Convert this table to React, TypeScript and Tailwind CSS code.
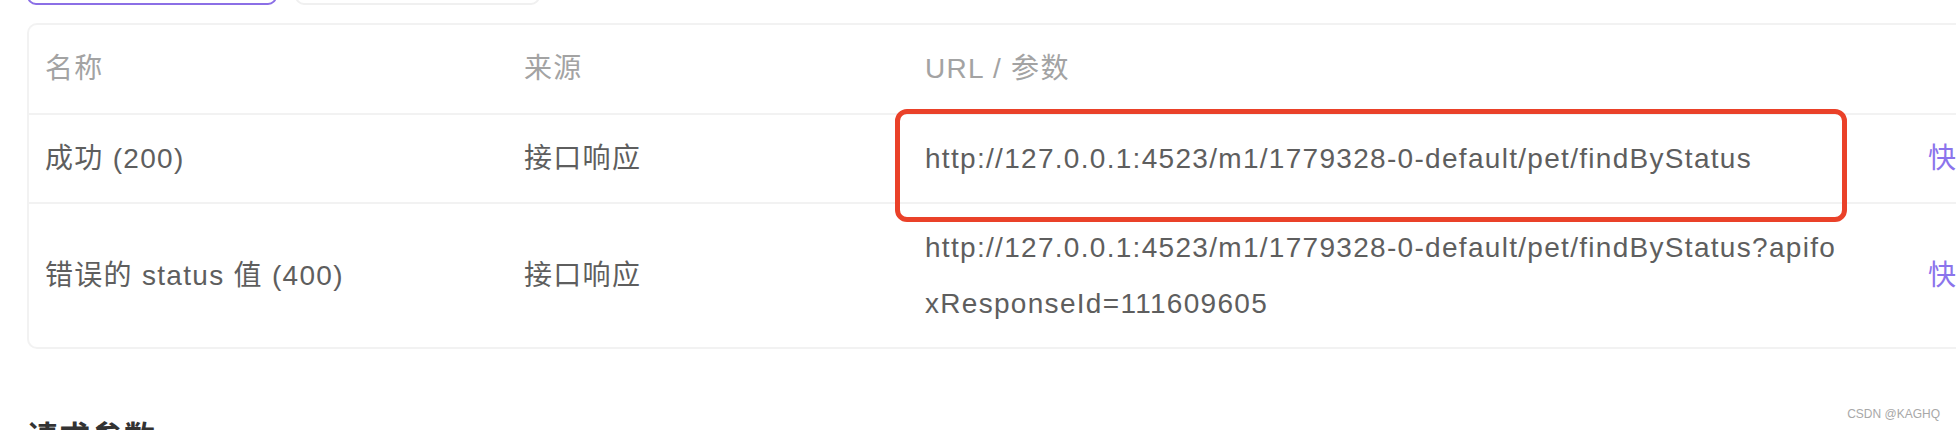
import React from "react";

type Row = {
    name: string;
    source: string;
    url: string;
    highlighted?: boolean;
};

const rows: Row[] = [
    {
        name: "成功 (200)",
        source: "接口响应",
        url: "http://127.0.0.1:4523/m1/1779328-0-default/pet/findByStatus",
        highlighted: true,
    },
    {
        name: "错误的 status 值 (400)",
        source: "接口响应",
        url: "http://127.0.0.1:4523/m1/1779328-0-default/pet/findByStatus?apifoxResponseId=111609605",
    },
];

const cols = "grid grid-cols-[479px_401px_1003px_200px]";

export default function App() {
    return (
        <div
            className="relative h-[430px] w-[1956px] overflow-hidden bg-white pl-[27px] text-[28px] tracking-[1.3px] text-[#5e5e5e]"
            style={{ fontFamily: '"Liberation Sans", "Noto Sans CJK SC", sans-serif' }}
        >
            {/* 顶部标签（只露出底边） */}
            <div className="-mt-[30px] flex gap-[18px]">
                <div className="h-[35px] w-[250px] rounded-[9px] border-2 border-[#8b6fe6]" />
                <div className="h-[35px] w-[245px] rounded-[9px] border-2 border-[#f0f0f0]" />
            </div>

            {/* 表格 */}
            <div className="mt-[18px] w-[2100px] rounded-tl-[10px] rounded-bl-[10px] border-2 border-r-0 border-[#f2f2f2]">
                <div className={`${cols} border-b-2 border-[#f2f2f2] text-[#a3a3a3]`}>
                    <div className="px-4 py-4 leading-[56px]">名称</div>
                    <div className="px-4 py-4 leading-[56px]">来源</div>
                    <div className="px-4 py-4 leading-[56px]">URL / 参数</div>
                    <div />
                </div>

                {rows.map((row, i) => (
                    <div
                        key={i}
                        className={`${cols} items-center ${i < rows.length - 1 ? "border-b-2 border-[#f2f2f2]" : ""}`}
                    >
                        <div className="px-4 pt-4 pb-[15px] leading-[56px]">{row.name}</div>
                        <div className="px-4 pt-4 pb-[15px] leading-[56px]">{row.source}</div>
                        <div className="relative px-4 pt-4 pb-[15px] leading-[56px]">
                            <div className="w-[925px] break-all">{row.url}</div>
                            {row.highlighted && (
                                <div className="pointer-events-none absolute -left-[14px] -top-[6px] h-[113px] w-[952px] rounded-[12px] border-[5px] border-[#ea4129]" />
                            )}
                        </div>
                        <div className="px-4 leading-[56px] text-[#8b74ec]">快捷请求</div>
                    </div>
                ))}
            </div>

            {/* 下一节标题 */}
            <h2 className="mt-[69px] text-[31px] font-bold leading-[40px] text-[#333333]">请求参数</h2>

            {/* 水印 */}
            <div className="absolute right-[16px] bottom-[7px] text-[12px] tracking-normal text-[#a8a8a8]">
                CSDN @KAGHQ
            </div>
        </div>
    );
}
